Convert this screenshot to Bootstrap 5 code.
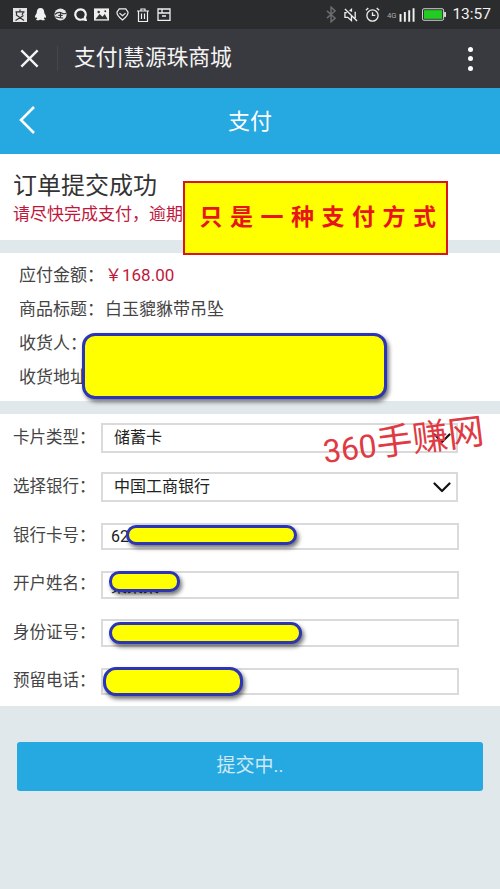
<!DOCTYPE html>
<html lang="zh-CN">
<head>
    <meta charset="UTF-8">
    <meta name="viewport" content="width=device-width, initial-scale=1.0">
    <title>支付|慧源珠商城</title>
    <link href="https://cdn.jsdelivr.net/npm/bootstrap@5.3.0/dist/css/bootstrap.min.css" rel="stylesheet">
    <style>
        body {
            font-family: Roboto, "Noto Sans CJK SC", sans-serif;
            background: #e1e8ec;
            color: #333;
        }
        .shot {
            position: relative;
            width: 500px;
            height: 889px;
            overflow: hidden;
        }
        .status-bar {
            height: 29px;
            background: #2b2c2e;
            padding: 0 9px 0 13px;
            color: #f2f2f2;
        }
        .status-left { gap: 7px; }
        .status-right { gap: 7px; }
        .status-time { font-size: 15.5px; margin-left: 6px; }
        .web-bar {
            height: 59px;
            background: #393a3f;
            color: #f4f4f4;
            padding: 0 27px 0 20px;
        }
        .web-divider { width: 1px; height: 25px; background: #45464b; margin: 0 16px 0 18px; }
        .web-title { font-size: 21.8px; }
        .dots { width: 5px; }
        .dots i { display: block; width: 5px; height: 5px; border-radius: 50%; background: #fff; margin: 4.5px 0; }
        .page-head {
            height: 66px;
            background: #26a8e0;
            color: #fff;
            font-size: 22px;
        }
        .page-head svg { position: absolute; left: 18px; top: 17px; }
        .sheet { background: #fff; }
        .order-head { height: 86px; padding: 17px 13px 0; }
        .order-title { font-size: 24px; line-height: 30px; color: #333; }
        .order-tip { font-size: 17px; line-height: 26px; color: #c0183c; white-space: nowrap; }
        .gap-strip { height: 13px; }
        .info-box { height: 148px; padding: 5px 19px 0; }
        .info-line { height: 34px; font-size: 17px; line-height: 34px; color: #444; white-space: nowrap; }
        .info-line b { font-weight: 400; display: inline-block; width: 86px; }
        .price { color: #c0183c; }
        .colon { font-family: "Noto Sans CJK TC", sans-serif; font-style: normal; line-height: 0; }
        .form-box { height: 292px; padding: 9px 13px 0; }
        .field { display: flex; align-items: center; height: 30px; margin-bottom: 18.3px; }
        .field:nth-child(1) { margin-bottom: 19px; }
        .field:nth-child(3) { margin-top: 19.5px; }
        .field label { width: 88px; flex: none; font-size: 16.5px; color: #444; white-space: nowrap; }
        .field .form-select, .field .form-control {
            border: 2px solid #dadada;
            border-radius: 0;
            color: #222;
            font-size: 16px;
            box-shadow: none;
            padding: 0 30px 0 11px;
            background-color: #fff;
        }
        .field .form-select {
            width: 357px;
            height: 30px;
            background-image: url("data:image/svg+xml,%3csvg xmlns='http://www.w3.org/2000/svg' viewBox='0 0 18 11'%3e%3cpath fill='none' stroke='%23111' stroke-width='2.2' stroke-linecap='round' stroke-linejoin='round' d='M1.5 1.5 9 9l7.5-7.5'/%3e%3c/svg%3e");
            background-size: 18px 11px;
            background-position: right 5px center;
        }
        .field .form-control { width: 358px; height: 27.5px; padding-left: 8px; }
        .submit-btn {
            display: block;
            width: 466px;
            height: 49px;
            margin: 36px 0 0 17px;
            background: #26a8e0;
            border: 0;
            border-radius: 3px;
            color: #cfe9f5;
            font-size: 19px;
        }
        /* pasted-on marks from the screenshot */
        .notice-box {
            position: absolute;
            left: 183px;
            top: 181px;
            width: 265px;
            height: 74px;
            padding-left: 12px;
            background: #ff0;
            border: 2px solid #d8141c;
            color: #e8141c;
            font-family: "Liberation Serif", "Noto Sans CJK SC", serif;
            font-weight: 700;
            font-size: 23px;
            letter-spacing: 7.5px;
            white-space: nowrap;
        }
        .blot {
            position: absolute;
            background: #ff0;
            border: 3px solid #2b35b5;
            box-shadow: 2px 3px 4px rgba(0, 0, 0, .55);
        }
        .blot-a { left: 82px; top: 333px; width: 305px; height: 66px; border-radius: 13px; }
        .blot-b { left: 126px; top: 525px; width: 171px; height: 20px; border-radius: 10px; }
        .blot-c { left: 109px; top: 571px; width: 71px; height: 21px; border-radius: 10px; }
        .blot-d { left: 109px; top: 622px; width: 193px; height: 22px; border-radius: 11px; }
        .blot-e { left: 103px; top: 667px; width: 140px; height: 29px; border-radius: 13px; }
        .stamp {
            position: absolute;
            left: 323px;
            top: 431px;
            color: #e03a44;
            font-size: 32px;
            line-height: 40px;
            white-space: nowrap;
            transform: rotate(-7deg);
            transform-origin: left center;
        }
        .stamp em { font-style: normal; font-size: 36px; font-family: "Liberation Serif", "Noto Sans CJK SC", serif; }
    </style>
</head>
<body>
    <div class="shot">
        <div class="status-bar d-flex align-items-center">
            <div class="status-left d-flex align-items-center">
                <svg width="14" height="14" viewBox="0 0 14 14"><rect width="14" height="14" fill="#e4e4e4"/><path d="M7 1.500v2M2.500 3.800h9M3.500 3.800v4M10.500 3.800 9 7M4 7.500l7 5M10.500 7.500l-8 5" stroke="#333" stroke-width="1.200" fill="none"/></svg>
                <svg width="13" height="15" viewBox="0 0 14 15"><path d="M7 .5c2.800 0 4 2.200 4 4.700 0 .8.300 1.300.800 2 .800 1.100 1.500 2.600 1.100 3.500-.300.500-.900-.100-1.300-.900-.100 1-.500 1.800-1.100 2.300.900.300 1.400.800 1 1.300-.500.500-3 .5-3.800-.200-.300.100-1 .100-1.400 0-.800.700-3.300.700-3.800.200-.400-.500.100-1 1-1.300-.600-.500-1-1.300-1.100-2.300-.400.800-1 1.400-1.300.900-.400-.900.300-2.400 1.100-3.500.500-.700.800-1.200.800-2C3 2.700 4.200.5 7 .5z" fill="#f2f2f2"/></svg>
                <svg width="13" height="13" viewBox="0 0 15 15"><circle cx="7.500" cy="7.500" r="7" fill="#e8e8e8"/><path d="M1 7.500c3-3 6-3 8.500-1.500 1.500.800 3 .800 4.500 0M7.500 5v6M5 8.500h5M1.500 10c3 1 5 2 9 1.500" stroke="#333" stroke-width="1.300" fill="none"/></svg>
                <svg width="13" height="13" viewBox="0 0 15 15"><path d="M7.500 1.500a6 6 0 1 0 2.800 11.300l3.200 1-1-3A6 6 0 0 0 7.500 1.500z" fill="none" stroke="#f2f2f2" stroke-width="2.500"/></svg>
                <svg width="15" height="13" viewBox="0 0 16 13"><rect width="16" height="13" fill="#efefef"/><path d="M1.500 11.500 6 6l3 3 2.500-3 3 5.500z" fill="#333"/><circle cx="5" cy="3.800" r="1.300" fill="#333"/><circle cx="12" cy="3" r="1" fill="#333"/></svg>
                <svg width="13" height="13" viewBox="0 0 14 14"><path d="M3.500 1h7L13 4.500c0 3-3.500 6.500-6 8.500-2.500-2-6-5.500-6-8.500z" fill="none" stroke="#f0f0f0" stroke-width="1.300"/><path d="M3.800 5.500 7 8.200l3.200-2.700" fill="none" stroke="#f0f0f0" stroke-width="1.300"/></svg>
                <svg width="14" height="14" viewBox="0 0 13 14"><path d="M.5 3h12M4.500 3V1h4v2M2 3v10.500h9V3M5 5.500v5.500M8 5.500v5.500" fill="none" stroke="#f0f0f0" stroke-width="1.200"/></svg>
                <svg width="14" height="13" viewBox="0 0 14 13"><path d="M1 1h12v11.500H1zM1 5h12M5 1v4M5 8h4" fill="none" stroke="#f0f0f0" stroke-width="1.300"/></svg>
            </div>
            <div class="status-right d-flex align-items-center ms-auto">
                <svg width="11" height="17" viewBox="0 0 12 18"><path d="M1 5l9 8-4.500 4V1L10 5l-9 8" fill="none" stroke="#6b6c6e" stroke-width="1.600"/></svg>
                <svg width="14" height="14" viewBox="0 0 15 15"><path d="M1 1l13 13M3 5H1v5h3l4 3.500V8M8 4V1.500L6 3.200M12 4v7" fill="none" stroke="#eee" stroke-width="1.400"/></svg>
                <svg width="15" height="15" viewBox="0 0 16 16"><circle cx="8" cy="9" r="6" fill="none" stroke="#eee" stroke-width="1.400"/><path d="M8 5.500V9h3M1 3.500 3.500 1M15 3.500 12.500 1" fill="none" stroke="#eee" stroke-width="1.400"/></svg>
                <svg width="28" height="14" viewBox="0 0 29 14"><text x="0" y="10" font-size="8" font-family="Roboto" fill="#aaa">4G</text><path d="M13 6v8h2V6zM17.500 4v10h2V4zM22 2v12h2V2zM26.500 0v14h2V0z" fill="#f0f0f0"/></svg>
                <svg width="24" height="13" viewBox="0 0 25 13"><rect x=".5" y=".5" width="22" height="12" rx="1.500" fill="none" stroke="#ddd"/><rect x="2" y="2" width="19" height="9" fill="#22cc22"/><rect x="23" y="4" width="2" height="5" fill="#ddd"/></svg>
            </div>
            <span class="status-time">13:57</span>
        </div>

        <div class="web-bar d-flex align-items-center">
            <svg width="19" height="19" viewBox="0 0 21 21"><path d="M1.500 1.500l18 18M19.500 1.500l-18 18" stroke="#f4f4f4" stroke-width="2.600" fill="none"/></svg>
            <span class="web-divider"></span>
            <span class="web-title">支付|慧源珠商城</span>
            <div class="dots ms-auto"><i></i><i></i><i></i></div>
        </div>

        <div class="page-head position-relative d-flex align-items-center justify-content-center">
            <svg width="18" height="30" viewBox="0 0 18 30"><path d="M16 2 3 15l13 13" fill="none" stroke="#fff" stroke-width="2.600"/></svg>
            <span>支付</span>
        </div>

        <div class="sheet order-head">
            <div class="order-title">订单提交成功</div>
            <div class="order-tip">请尽快完成支付&#xFF0C;逾期</div>
        </div>
        <div class="gap-strip"></div>

        <div class="sheet info-box">
            <div class="info-line"><b>应付金额<i class="colon">&#xFF1A;</i></b><span class="price">&#xFFE5;168.00</span></div>
            <div class="info-line"><b>商品标题<i class="colon">&#xFF1A;</i></b>白玉貔貅带吊坠</div>
            <div class="info-line"><b>收货人<i class="colon">&#xFF1A;</i></b></div>
            <div class="info-line"><b>收货地址<i class="colon">&#xFF1A;</i></b></div>
        </div>
        <div class="gap-strip"></div>

        <form class="sheet form-box">
            <div class="field">
                <label for="cardType">卡片类型<i class="colon">&#xFF1A;</i></label>
                <select class="form-select" id="cardType"><option>储蓄卡</option></select>
            </div>
            <div class="field">
                <label for="bank">选择银行<i class="colon">&#xFF1A;</i></label>
                <select class="form-select" id="bank"><option>中国工商银行</option></select>
            </div>
            <div class="field">
                <label for="cardNo">银行卡号<i class="colon">&#xFF1A;</i></label>
                <input class="form-control" id="cardNo" value="62">
            </div>
            <div class="field">
                <label for="holder">开户姓名<i class="colon">&#xFF1A;</i></label>
                <input class="form-control" id="holder" value="某某某">
            </div>
            <div class="field">
                <label for="idNo">身份证号<i class="colon">&#xFF1A;</i></label>
                <input class="form-control" id="idNo">
            </div>
            <div class="field">
                <label for="phone">预留电话<i class="colon">&#xFF1A;</i></label>
                <input class="form-control" id="phone">
            </div>
        </form>

        <button type="button" class="btn submit-btn">提交中..</button>

        <div class="notice-box d-flex align-items-center justify-content-center">只是一种支付方式</div>
        <div class="blot blot-a"></div>
        <div class="blot blot-b"></div>
        <div class="blot blot-c"></div>
        <div class="blot blot-d"></div>
        <div class="blot blot-e"></div>
        <div class="stamp">360<em>手赚网</em></div>
    </div>
    <script src="https://cdn.jsdelivr.net/npm/bootstrap@5.3.0/dist/js/bootstrap.bundle.min.js"></script>
</body>
</html>
